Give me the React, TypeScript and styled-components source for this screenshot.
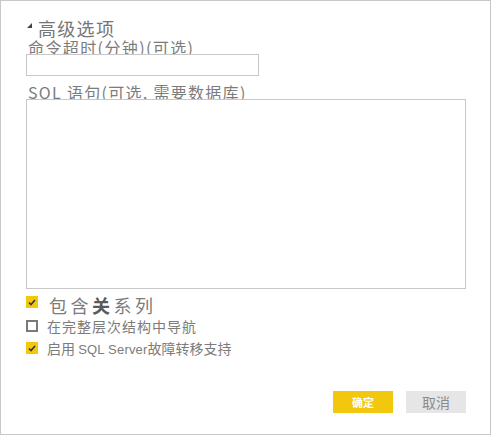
import React from 'react';
import styled, { createGlobalStyle } from 'styled-components';

const GlobalStyle = createGlobalStyle`
  html, body {
    margin: 0;
    padding: 0;
    background: #ffffff;
  }
  body {
    font-family: "Noto Sans CJK SC", "Noto Sans", sans-serif;
  }
`;

const Frame = styled.div`
  box-sizing: border-box;
  width: 491px;
  height: 435px;
  border: 1px solid #c8c8c8;
  padding: 18px 24px 0 25px;
  display: flex;
  flex-direction: column;
  background: #fff;
`;

const SectionHeader = styled.div`
  display: flex;
  align-items: center;
  gap: 6px;
  height: 18px;
  padding-left: 1px;
`;

const Triangle = styled.span`
  width: 0;
  height: 0;
  border-left: 5px solid transparent;
  border-bottom: 5px solid #444;
  margin-top: -6px;
`;

const SectionTitle = styled.span`
  font-size: 18px;
  line-height: 18px;
  letter-spacing: 1.3px;
  color: #767676;
`;

const FieldLabel = styled.label<{ $top: number; $spacing: number; $height: number }>`
  display: block;
  margin-top: ${p => p.$top}px;
  padding-left: 2px;
  font-size: 16px;
  line-height: ${p => p.$height}px;
  height: ${p => p.$height}px;
  color: #7c7c7c;
  letter-spacing: ${p => p.$spacing}px;
  white-space: nowrap;
`;

const TextInput = styled.input`
  box-sizing: border-box;
  width: 233px;
  height: 22px;
  margin: 0;
  border: 1px solid #c8c8c8;
  outline: none;
  background: #fff;
`;

const TextArea = styled.textarea`
  box-sizing: border-box;
  display: block;
  width: 440px;
  height: 190px;
  margin: 0;
  border: 1px solid #c8c8c8;
  outline: none;
  resize: none;
  background: #fff;
`;

const CheckRow = styled.div<{ $top: number }>`
  display: flex;
  align-items: flex-start;
  margin-top: ${p => p.$top}px;
`;

const Box = styled.span<{ $checked: boolean }>`
  box-sizing: border-box;
  flex: none;
  width: 12px;
  height: 12px;
  display: flex;
  align-items: center;
  justify-content: center;
  background: ${p => (p.$checked ? '#f2c80f' : '#fff')};
  border: ${p => (p.$checked ? 'none' : '2px solid #7a7a7a')};
`;

const CheckLabel = styled.span<{ $big?: boolean; $spacing: number }>`
  margin-left: ${p => (p.$big ? 11 : 9)}px;
  font-size: ${p => (p.$big ? 18 : 14)}px;
  line-height: ${p => (p.$big ? 17 : 13)}px;
  letter-spacing: ${p => p.$spacing}px;
  margin-top: ${p => (p.$big ? 1 : 0)}px;
  color: #7c7c7c;
  white-space: nowrap;
`;

const Latin = styled.span`
  font-family: "Liberation Sans", sans-serif;
  font-size: 13px;
  letter-spacing: 0.2px;
`;

const Strong = styled.b`
  color: #5a5a5a;
`;

const Footer = styled.div`
  display: flex;
  justify-content: flex-end;
  gap: 13px;
  margin-top: 35px;
`;

const Button = styled.button<{ $primary?: boolean }>`
  width: 60px;
  height: 22px;
  padding: 0;
  border: none;
  font-family: "Noto Sans CJK SC", sans-serif;
  font-size: ${p => (p.$primary ? 11 : 14)}px;
  font-weight: ${p => (p.$primary ? 700 : 400)};
  color: ${p => (p.$primary ? '#ffffff' : '#8a8a8a')};
  background: ${p => (p.$primary ? '#f2c80f' : '#e6e6e6')};
  display: flex;
  align-items: center;
  justify-content: center;
`;

const Tick = () => (
  <svg width="8" height="7" viewBox="0 0 8 7">
    <path d="M1 3.5 L3 5.5 L7 1" fill="none" stroke="#333" strokeWidth="1.6" />
  </svg>
);

const Check: React.FC<{ checked: boolean }> = ({ checked }) => (
  <Box $checked={checked}>{checked && <Tick />}</Box>
);

export default function App() {
  return (
    <>
      <GlobalStyle />
      <Frame>
        <SectionHeader>
          <Triangle />
          <SectionTitle>高级选项</SectionTitle>
        </SectionHeader>
        <FieldLabel $top={4} $height={13} $spacing={1.4}>命令超时(分钟)(可选)</FieldLabel>
        <TextInput />
        <FieldLabel $top={9} $height={14} $spacing={1.3}>SQL 语句(可选, 需要数据库)</FieldLabel>
        <TextArea />
        <CheckRow $top={7}>
          <Check checked />
          <CheckLabel $big $spacing={3.5}>
            包含<Strong>关</Strong>系列
          </CheckLabel>
        </CheckRow>
        <CheckRow $top={6}>
          <Check checked={false} />
          <CheckLabel $spacing={1}>在完整层次结构中导航</CheckLabel>
        </CheckRow>
        <CheckRow $top={9}>
          <Check checked />
          <CheckLabel $spacing={0}>
            启用 <Latin>SQL Server</Latin>故障转移支持
          </CheckLabel>
        </CheckRow>
        <Footer>
          <Button $primary>确定</Button>
          <Button>取消</Button>
        </Footer>
      </Frame>
    </>
  );
}
